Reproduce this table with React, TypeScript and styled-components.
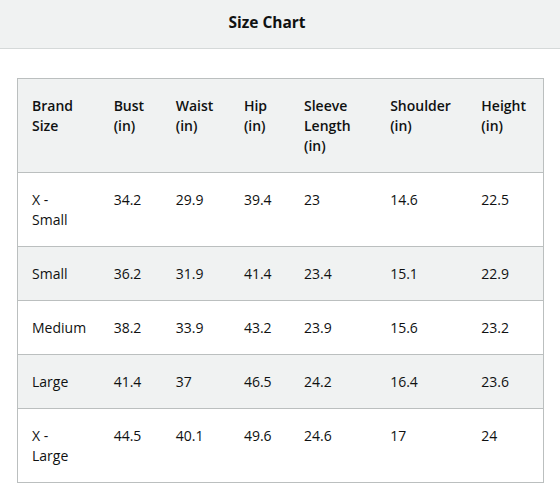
import React from "react";
import styled, { createGlobalStyle } from "styled-components";

const Global = createGlobalStyle`
  html, body { margin: 0; padding: 0; background: #ffffff; }
  body { font-family: "Open Sans", "Noto Sans", Arial, sans-serif; color: #0f1111; }
`;

const Page = styled.div`
  width: 560px;
  min-height: 501px;
  background: #ffffff;
`;

const Header = styled.header`
  height: 48px;
  background: #f0f2f2;
  border-bottom: 1px solid #d5d9d9;
  display: flex;
  align-items: center;
  justify-content: center;
  padding-right: 26px;
`;

const Title = styled.h1`
  margin: 0;
  font-size: 15.5px;
  font-weight: 700;
  line-height: 20px;
  color: #0f1111;
  padding-bottom: 5px;
`;

const Body = styled.div`
  padding: 29px 15px 0 17px;
`;

const Table = styled.table`
  border-collapse: collapse;
  table-layout: fixed;
  width: 527px;
  border: 1px solid #bbbfbf;
  font-size: 14px;
  line-height: 20px;
`;

const Row = styled.tr<{ $shade: boolean }>`
  background: ${(p) => (p.$shade ? "#f0f2f2" : "#ffffff")};
  border-bottom: 1px solid #bbbfbf;
`;

const HeadCell = styled.th<{ $first?: boolean }>`
  text-align: left;
  vertical-align: top;
  font-weight: 600;
  padding: 17px ${(p) => (p.$first ? "18px" : "10px")} 16px 14px;
`;

const Cell = styled.td<{ $first?: boolean }>`
  text-align: left;
  vertical-align: top;
  font-weight: 400;
  white-space: normal;
  padding: 17px ${(p) => (p.$first ? "18px" : "10px")} 16px 14px;
`;

const widths = [82, 62, 68, 60, 86, 91, 76];

const headers = [
  "Brand Size",
  "Bust (in)",
  "Waist (in)",
  "Hip (in)",
  "Sleeve Length (in)",
  "Shoulder (in)",
  "Height (in)",
];

const rows: string[][] = [
  ["X - Small", "34.2", "29.9", "39.4", "23", "14.6", "22.5"],
  ["Small", "36.2", "31.9", "41.4", "23.4", "15.1", "22.9"],
  ["Medium", "38.2", "33.9", "43.2", "23.9", "15.6", "23.2"],
  ["Large", "41.4", "37", "46.5", "24.2", "16.4", "23.6"],
  ["X - Large", "44.5", "40.1", "49.6", "24.6", "17", "24"],
];

export default function App() {
  return (
    <Page>
      <Global />
      <Header>
        <Title>Size Chart</Title>
      </Header>
      <Body>
        <Table>
          <colgroup>
            {widths.map((w, i) => (
              <col key={i} style={{ width: w }} />
            ))}
          </colgroup>
          <thead>
            <Row $shade={true}>
              {headers.map((h, j) => (
                <HeadCell key={h} $first={j === 0}>
                  {h}
                </HeadCell>
              ))}
            </Row>
          </thead>
          <tbody>
            {rows.map((r, i) => (
              <Row key={r[0]} $shade={i % 2 === 1}>
                {r.map((c, j) => (
                  <Cell key={j} $first={j === 0}>
                    {c}
                  </Cell>
                ))}
              </Row>
            ))}
          </tbody>
        </Table>
      </Body>
    </Page>
  );
}
